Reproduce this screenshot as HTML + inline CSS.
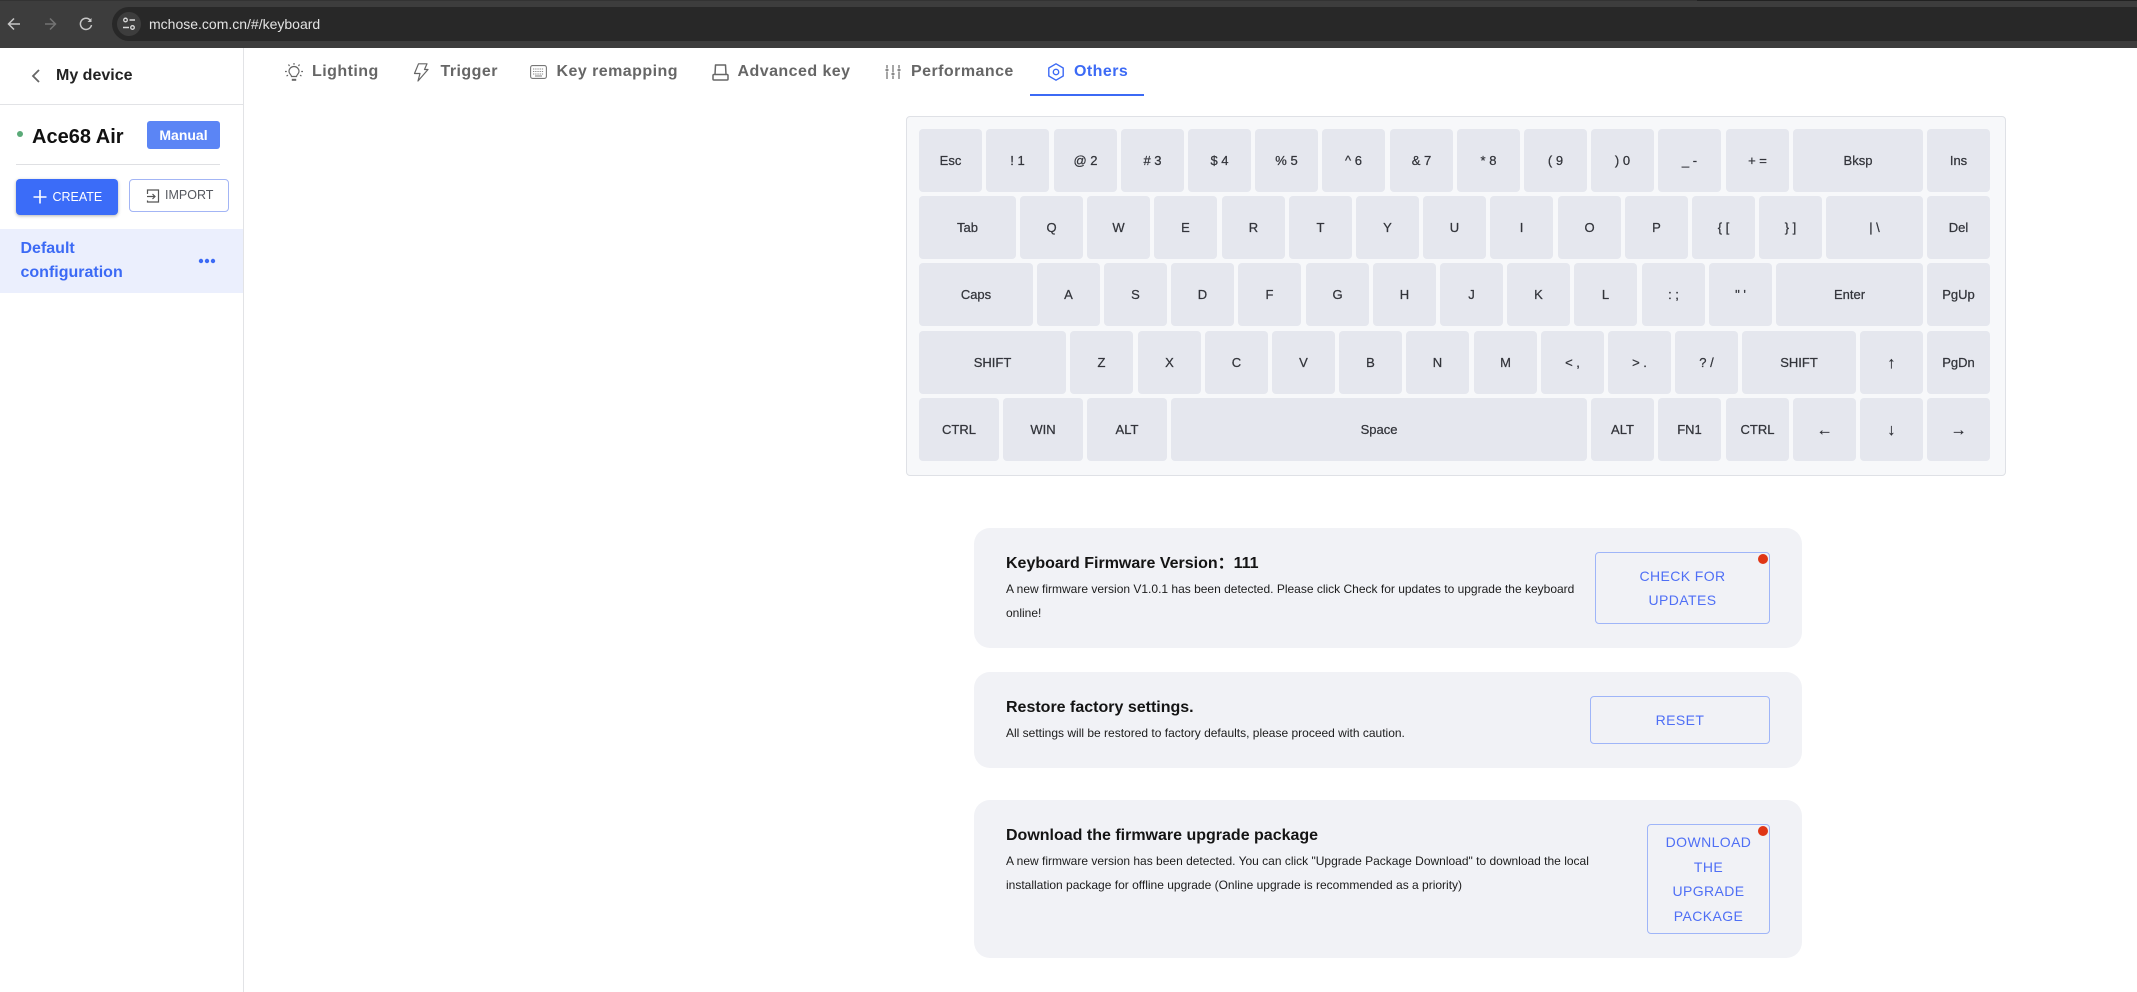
<!DOCTYPE html>
<html><head><meta charset="utf-8"><title>Keyboard</title>
<style>
html,body{margin:0;padding:0;background:#fff}
body{position:relative;width:2137px;height:992px;overflow:hidden;font-family:"Liberation Sans",Arial,sans-serif}
.a{position:absolute;white-space:nowrap}
.tab{position:absolute;top:60px;line-height:24px;font-size:16px;font-weight:700;letter-spacing:.45px;color:#666;white-space:nowrap}
svg{position:absolute;overflow:visible}
#kb{position:absolute;left:906px;top:116px;width:1100px;height:360px;box-sizing:border-box;background:#f7f8fa;border:1px solid #dfe1e6;border-radius:4px}
.k{position:absolute;height:63px;line-height:63px;margin:-117px 0 0 -907px;background:#e5e7ee;border-radius:4px;text-align:center;font-size:13px;color:#33353b;white-space:nowrap;-webkit-text-stroke:.25px #33353b}
.ar{font-size:16px;padding-top:1px;height:62px}
.r1{top:129px}.r2{top:196px}.r3{top:263px}.r4{top:331px}.r5{top:398px}
.w{width:63px}
.card{position:absolute;left:974px;width:828px;background:#f1f2f6;border-radius:16px}
.h{position:absolute;left:1006px;font-size:16px;font-weight:700;line-height:24px;color:#141414;white-space:nowrap}
.d{position:absolute;left:1006px;font-size:12px;line-height:24px;color:#1c1c1c;white-space:nowrap}
.btn{position:absolute;box-sizing:border-box;border:1px solid #9fb5f8;border-radius:4px;color:#4f6ff5;font-size:14px;letter-spacing:.4px;text-align:center;line-height:24px;display:flex;align-items:center;justify-content:center}
.dot{position:absolute;width:10px;height:10px;border-radius:50%;background:#e03616}
</style></head><body>

<!-- browser chrome -->
<div class="a" style="left:0;top:0;width:2137px;height:48px;background:#3d3d3d"></div>
<div class="a" style="left:0;top:0;width:1697px;height:1px;background:#333"></div>
<div class="a" style="left:1697px;top:0;width:440px;height:1px;background:#222"></div>
<div class="a" style="left:112px;top:7px;width:2040px;height:34px;border-radius:17px;background:#282828"></div>
<div class="a" style="left:117px;top:12px;width:24px;height:24px;border-radius:50%;background:#3d3d3d"></div>
<svg style="left:0;top:0" width="160" height="48" fill="none">
<path d="M20 24H9M14 18.500L8.500 24L14 29.500" stroke="#c7c7c7" stroke-width="1.500"/>
<path d="M45 24H55.500M50 18.500L55.500 24L50 29.500" stroke="#737373" stroke-width="1.500"/>
<path d="M90.500 20.500A5.600 5.600 0 1 0 91.500 25" stroke="#c7c7c7" stroke-width="1.500"/>
<path d="M91.500 18V22H87.500Z" fill="#c7c7c7"/>
<circle cx="125.500" cy="20" r="1.800" stroke="#d8d8d8" stroke-width="1.300"/>
<path d="M129.500 20H135M123 27.500H129" stroke="#d8d8d8" stroke-width="1.400"/>
<circle cx="132.500" cy="27.500" r="1.800" stroke="#d8d8d8" stroke-width="1.300"/>
</svg>
<div class="a" style="left:149px;top:14px;line-height:20px;font-size:14px;color:#e3e3e3">mchose.com.cn/#/keyboard</div>

<!-- sidebar -->
<div class="a" style="left:243px;top:48px;width:1px;height:944px;background:#e2e3e6"></div>
<div class="a" style="left:0;top:104px;width:243px;height:1px;background:#e2e3e6"></div>
<svg style="left:0;top:48px" width="60" height="50" fill="none"><path d="M39 22L33 28L39 34" stroke="#666" stroke-width="1.800"/></svg>
<div class="a" style="left:56px;top:64px;line-height:24px;font-size:16px;font-weight:700;color:#222">My device</div>
<div class="a" style="left:17px;top:131px;width:6px;height:6px;border-radius:50%;background:#5aaa78"></div>
<div class="a" style="left:32px;top:125px;line-height:24px;font-size:20px;font-weight:700;color:#111">Ace68 Air</div>
<div class="a" style="left:147px;top:121px;width:73px;height:28px;border-radius:3px;background:#5b85f5;color:#fff;font-size:14px;font-weight:700;text-align:center;line-height:28px">Manual</div>
<div class="a" style="left:16px;top:164px;width:204px;height:1px;background:#dfe0e3"></div>
<div class="a" style="left:16px;top:179px;width:102px;height:36px;border-radius:4px;background:#3b6cf8;box-shadow:0 1px 3px rgba(0,0,0,.3)"></div>
<svg style="left:0;top:180px" width="60" height="36" fill="none"><path d="M40 10V23.500M33.500 17H46.500" stroke="#fff" stroke-width="1.600"/></svg>
<div class="a" style="left:52.500px;top:188px;line-height:18px;font-size:12.500px;color:#fff">CREATE</div>
<div class="a" style="left:129px;top:179px;width:100px;height:33px;box-sizing:border-box;border:1px solid #a3b5f5;border-radius:4px;background:#fff"></div>
<svg style="left:146px;top:189px" width="14" height="14" fill="none" stroke="#555" stroke-width="1.200"><path d="M1.500 5V1H12.500V13H1.500V11.500"/><path d="M1 7.500H9M6.500 5L9 7.500L6.500 10"/></svg>
<div class="a" style="left:165px;top:186px;line-height:18px;font-size:12.500px;color:#55585f">IMPORT</div>
<div class="a" style="left:0;top:229px;width:243px;height:64px;background:#ebeffd"></div>
<div class="a" style="left:20.500px;top:237px;line-height:24px;font-size:16px;font-weight:700;color:#3c6af5">Default<br>configuration</div>
<svg style="left:197px;top:256px" width="20" height="10" fill="#3c6af5"><circle cx="4" cy="5" r="2.200"/><circle cx="10" cy="5" r="2.200"/><circle cx="16" cy="5" r="2.200"/></svg>

<!-- tabs -->
<svg style="left:285px;top:63px" width="18" height="18" fill="none" stroke="#666" stroke-width="1.200">
<path d="M6.500 13.500C6.500 11.800 4 11 4 8.500A5 5 0 0 1 14 8.500C14 11 11.500 11.800 11.500 13.500Z"/>
<path d="M6.800 16.800H11.200" stroke-width="2"/>
<path d="M9 0V1.800M3.500 1.500L4.500 3M14.500 1.500L13.500 3M0 8.500H1.800M16.200 8.500H18M1.500 13L3 12.200M16.500 13L15 12.200"/>
</svg>
<div class="tab" style="left:312px">Lighting</div>
<svg style="left:413px;top:63px" width="16" height="19" fill="none" stroke="#666" stroke-width="1.200" stroke-linejoin="round">
<path d="M5.500 .800H14L11.500 6.500H15L5 18L7 10.500H1.500Z"/>
</svg>
<div class="tab" style="left:440.500px">Trigger</div>
<svg style="left:530px;top:65px" width="17" height="14" fill="none" stroke="#777" stroke-width="1.100">
<rect x=".600" y=".600" width="15.800" height="12.800" rx="2"/>
<path d="M3 4H14M3 6.500H14M3 9H14" stroke-dasharray="1.300 .9" stroke="#888"/><path d="M5 11H12" stroke="#888"/>
</svg>
<div class="tab" style="left:556.500px">Key remapping</div>
<svg style="left:712px;top:64px" width="17" height="17" fill="none" stroke="#666" stroke-width="1.500" stroke-linejoin="round">
<path d="M3 10.500L3.500 1H13.500L14 10.500"/><rect x="1" y="10.500" width="15" height="5.500" rx="1"/>
</svg>
<div class="tab" style="left:737.500px">Advanced key</div>
<svg style="left:885px;top:65px" width="16" height="14" fill="none" stroke="#777" stroke-width="1.300">
<path d="M2 0V3.500M2 6.500V14M8 0V7.500M8 10.500V14M14 0V3.500M14 6.500V14"/>
<path d="M.500 5H3.500M6.500 9H9.500M12.500 5H15.500" stroke-width="1.800"/>
</svg>
<div class="tab" style="left:911px">Performance</div>
<svg style="left:1048px;top:63px" width="16" height="18" fill="none" stroke="#3c6af5" stroke-width="1.400" stroke-linejoin="round">
<path d="M8 .800L15.200 5V13L8 17.200L.800 13V5Z"/><circle cx="8" cy="9" r="2.700"/>
</svg>
<div class="tab" style="left:1074px;color:#3c6af5">Others</div>
<div class="a" style="left:1030px;top:94px;width:114px;height:2px;background:#3c6af5"></div>

<!-- keyboard -->
<div id="kb">
<div class="k r1 w" style="left:919px">Esc</div>
<div class="k r1 w" style="left:986px">! 1</div>
<div class="k r1 w" style="left:1054px">@ 2</div>
<div class="k r1 w" style="left:1121px"># 3</div>
<div class="k r1 w" style="left:1188px">$ 4</div>
<div class="k r1 w" style="left:1255px">% 5</div>
<div class="k r1 w" style="left:1322px">^ 6</div>
<div class="k r1 w" style="left:1390px">&amp; 7</div>
<div class="k r1 w" style="left:1457px">* 8</div>
<div class="k r1 w" style="left:1524px">( 9</div>
<div class="k r1 w" style="left:1591px">) 0</div>
<div class="k r1 w" style="left:1658px">_ -</div>
<div class="k r1 w" style="left:1726px">+ =</div>
<div class="k r1" style="left:1793px;width:130px">Bksp</div>
<div class="k r1 w" style="left:1927px">Ins</div>

<div class="k r2" style="left:919px;width:97px">Tab</div>
<div class="k r2 w" style="left:1020px">Q</div>
<div class="k r2 w" style="left:1087px">W</div>
<div class="k r2 w" style="left:1154px">E</div>
<div class="k r2 w" style="left:1222px">R</div>
<div class="k r2 w" style="left:1289px">T</div>
<div class="k r2 w" style="left:1356px">Y</div>
<div class="k r2 w" style="left:1423px">U</div>
<div class="k r2 w" style="left:1490px">I</div>
<div class="k r2 w" style="left:1558px">O</div>
<div class="k r2 w" style="left:1625px">P</div>
<div class="k r2 w" style="left:1692px">{ [</div>
<div class="k r2 w" style="left:1759px">} ]</div>
<div class="k r2" style="left:1826px;width:97px">| \</div>
<div class="k r2 w" style="left:1927px">Del</div>

<div class="k r3" style="left:919px;width:114px">Caps</div>
<div class="k r3 w" style="left:1037px">A</div>
<div class="k r3 w" style="left:1104px">S</div>
<div class="k r3 w" style="left:1171px">D</div>
<div class="k r3 w" style="left:1238px">F</div>
<div class="k r3 w" style="left:1306px">G</div>
<div class="k r3 w" style="left:1373px">H</div>
<div class="k r3 w" style="left:1440px">J</div>
<div class="k r3 w" style="left:1507px">K</div>
<div class="k r3 w" style="left:1574px">L</div>
<div class="k r3 w" style="left:1642px">: ;</div>
<div class="k r3 w" style="left:1709px">" '</div>
<div class="k r3" style="left:1776px;width:147px">Enter</div>
<div class="k r3 w" style="left:1927px">PgUp</div>

<div class="k r4" style="left:919px;width:147px">SHIFT</div>
<div class="k r4 w" style="left:1070px">Z</div>
<div class="k r4 w" style="left:1138px">X</div>
<div class="k r4 w" style="left:1205px">C</div>
<div class="k r4 w" style="left:1272px">V</div>
<div class="k r4 w" style="left:1339px">B</div>
<div class="k r4 w" style="left:1406px">N</div>
<div class="k r4 w" style="left:1474px">M</div>
<div class="k r4 w" style="left:1541px">&lt; ,</div>
<div class="k r4 w" style="left:1608px">&gt; .</div>
<div class="k r4 w" style="left:1675px">? /</div>
<div class="k r4" style="left:1742px;width:114px">SHIFT</div>
<div class="k r4 w ar" style="left:1860px">↑</div>
<div class="k r4 w" style="left:1927px">PgDn</div>

<div class="k r5" style="left:919px;width:80px">CTRL</div>
<div class="k r5" style="left:1003px;width:80px">WIN</div>
<div class="k r5" style="left:1087px;width:80px">ALT</div>
<div class="k r5" style="left:1171px;width:416px">Space</div>
<div class="k r5 w" style="left:1591px">ALT</div>
<div class="k r5 w" style="left:1658px">FN1</div>
<div class="k r5 w" style="left:1726px">CTRL</div>
<div class="k r5 w ar" style="left:1793px">←</div>
<div class="k r5 w ar" style="left:1860px">↓</div>
<div class="k r5 w ar" style="left:1927px">→</div>
</div>

<!-- card 1 -->
<div class="card" style="top:528px;height:120px"></div>
<div class="h" style="top:552px">Keyboard Firmware Version：111</div>
<div class="d" style="top:577px">A new firmware version V1.0.1 has been detected. Please click Check for updates to upgrade the keyboard<br>online!</div>
<div class="btn" style="left:1595px;top:552px;width:175px;height:72px">CHECK FOR<br>UPDATES</div>
<div class="dot" style="left:1758px;top:554px"></div>

<!-- card 2 -->
<div class="card" style="top:672px;height:96px"></div>
<div class="h" style="top:696px">Restore factory settings.</div>
<div class="d" style="top:721px">All settings will be restored to factory defaults, please proceed with caution.</div>
<div class="btn" style="left:1590px;top:696px;width:180px;height:48px">RESET</div>

<!-- card 3 -->
<div class="card" style="top:800px;height:158px"></div>
<div class="h" style="top:824px">Download the firmware upgrade package</div>
<div class="d" style="top:849px">A new firmware version has been detected. You can click "Upgrade Package Download" to download the local<br>installation package for offline upgrade (Online upgrade is recommended as a priority)</div>
<div class="btn" style="left:1647px;top:824px;width:123px;height:110px;line-height:24.500px">DOWNLOAD<br>THE<br>UPGRADE<br>PACKAGE</div>
<div class="dot" style="left:1758px;top:826px"></div>

</body></html>
